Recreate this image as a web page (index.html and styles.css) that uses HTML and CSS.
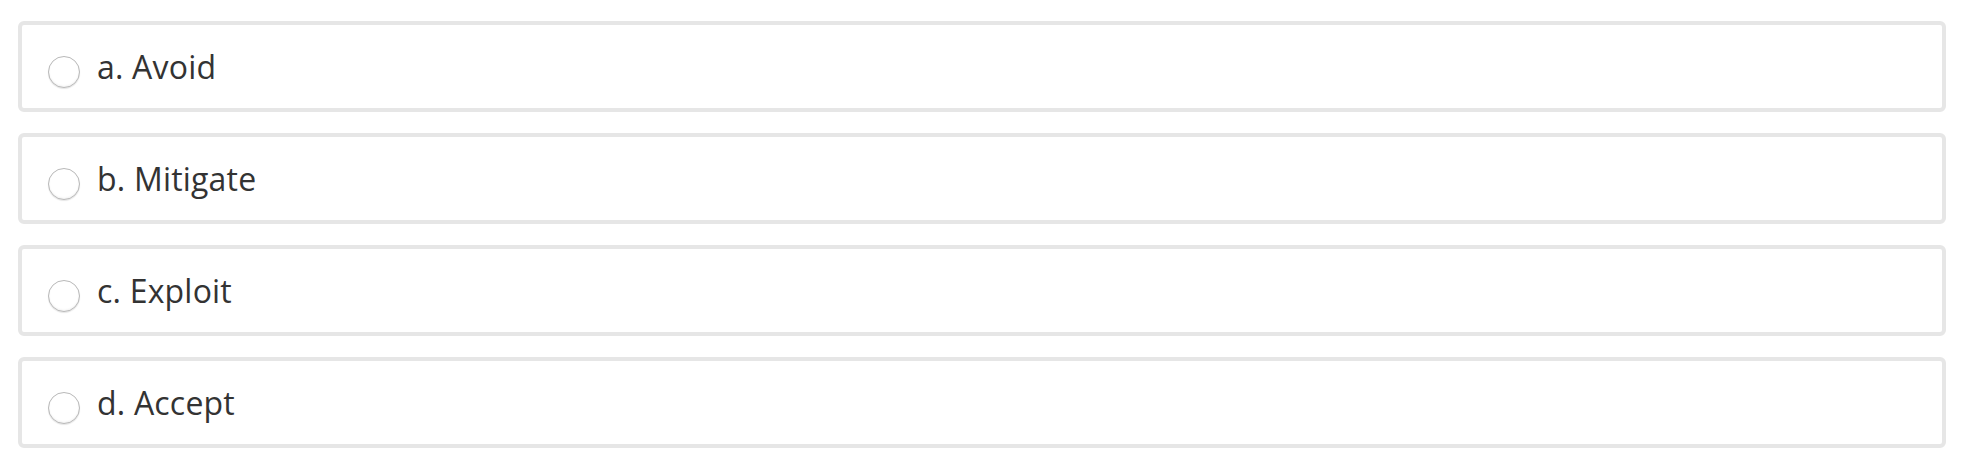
FILE: index.html
```html
<!DOCTYPE html>
<html lang="en">
<head>
  <meta charset="UTF-8" />
  <title>Question answers</title>
  <link rel="stylesheet" href="styles.css">
</head>
<body>
  <div class="answers">
    <label class="option">
      <span class="radio"></span>
      <span class="label">a. Avoid</span>
    </label>
    <label class="option">
      <span class="radio"></span>
      <span class="label">b. Mitigate</span>
    </label>
    <label class="option">
      <span class="radio"></span>
      <span class="label">c. Exploit</span>
    </label>
    <label class="option">
      <span class="radio"></span>
      <span class="label">d. Accept</span>
    </label>
  </div>
</body>
</html>
```

FILE: styles.css
```css
* {
  margin: 0;
  padding: 0;
  box-sizing: border-box;
}

body {
  font-family: 'Open Sans', 'Liberation Sans', sans-serif;
  background: #ffffff;
  color: #333333;
  padding: 21px 30px 0 18px;
}

.answers {
  display: flex;
  flex-direction: column;
  gap: 21px;
}

.option {
  display: flex;
  align-items: center;
  height: 91px;
  padding-left: 26px;
  border: 4px solid #e6e6e6;
  border-radius: 6px;
  background: #ffffff;
  cursor: pointer;
}

/* custom radio circle */
.radio {
  flex: none;
  width: 32px;
  height: 32px;
  margin-top: 11px;
  margin-right: 17px;
  border: 1.5px solid #b9b9b9;
  border-radius: 50%;
  background: #ffffff;
  box-shadow: inset 0 -1px 2px rgba(0, 0, 0, 0.06), 0 1px 1px rgba(0, 0, 0, 0.1);
}

.label {
  font-size: 32px;
  line-height: 1;
  letter-spacing: 0.2px;
}
```
